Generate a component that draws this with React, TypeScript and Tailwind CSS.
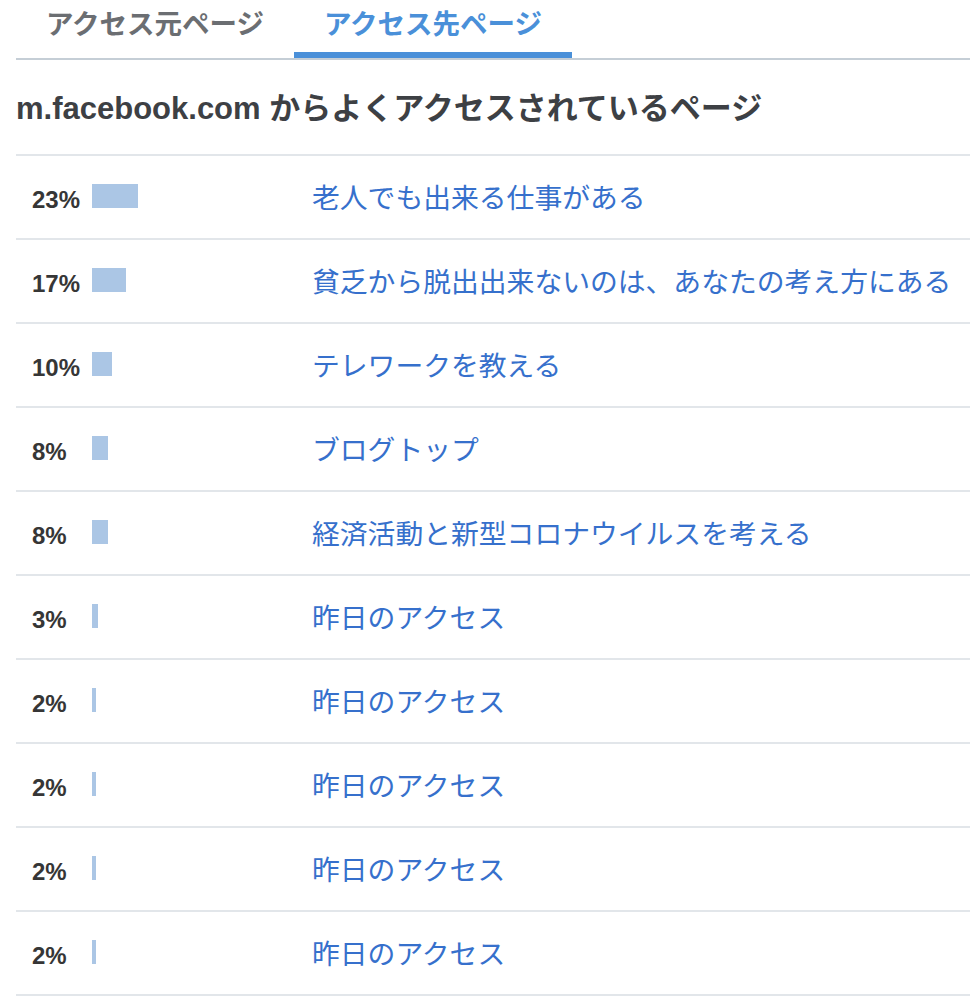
import React from "react";

interface PageRow {
  pct: number;
  title: string;
}

const ROWS: PageRow[] = [
  { pct: 23, title: "老人でも出来る仕事がある" },
  { pct: 17, title: "貧乏から脱出出来ないのは、あなたの考え方にある" },
  { pct: 10, title: "テレワークを教える" },
  { pct: 8, title: "ブログトップ" },
  { pct: 8, title: "経済活動と新型コロナウイルスを考える" },
  { pct: 3, title: "昨日のアクセス" },
  { pct: 2, title: "昨日のアクセス" },
  { pct: 2, title: "昨日のアクセス" },
  { pct: 2, title: "昨日のアクセス" },
  { pct: 2, title: "昨日のアクセス" },
];

const FONT = "font-['Liberation_Sans','Noto_Sans_CJK_JP',sans-serif]";

export default function App() {
  const active = 1;
  const tabs = ["アクセス元ページ", "アクセス先ページ"];

  return (
    <div className={`min-h-screen bg-white pl-[16px] ${FONT}`}>
      <div className="flex border-b-2 border-[#c5ced6]">
        {tabs.map((t, i) => (
          <button
            key={t}
            className={`h-[58px] w-[278px] border-b-[6px] pb-[2px] text-center text-[27.5px] font-bold leading-[40px] ${
              i === active ? "border-[#4a90d9] text-[#4a90d9]" : "border-transparent text-[#6b6e72]"
            }`}
          >
            {t}
          </button>
        ))}
      </div>

      <h2 className="mb-[25px] mt-[29px] text-[31px] font-bold leading-[40px] text-[#3d4044]">
        m.facebook.com からよくアクセスされているページ
      </h2>

      <div className="border-b-2 border-[#e2e6ea]">
        {ROWS.map((r, i) => (
          <div key={i} className="flex h-[84px] items-center border-t-2 border-[#e2e6ea] pl-[16px]">
            <div className="flex w-[280px] shrink-0 items-baseline pt-[4px]">
              <span className="w-[60px] text-[24px] font-bold leading-[28px] text-[#363636]">{r.pct}%</span>
              <div className="h-[24px] bg-[#abc6e5]" style={{ width: r.pct * 2 }} />
            </div>
            <a href="#" className="whitespace-nowrap pt-[3px] text-[27.8px] leading-[36px] text-[#3670cc]">
              {r.title}
            </a>
          </div>
        ))}
      </div>
    </div>
  );
}
